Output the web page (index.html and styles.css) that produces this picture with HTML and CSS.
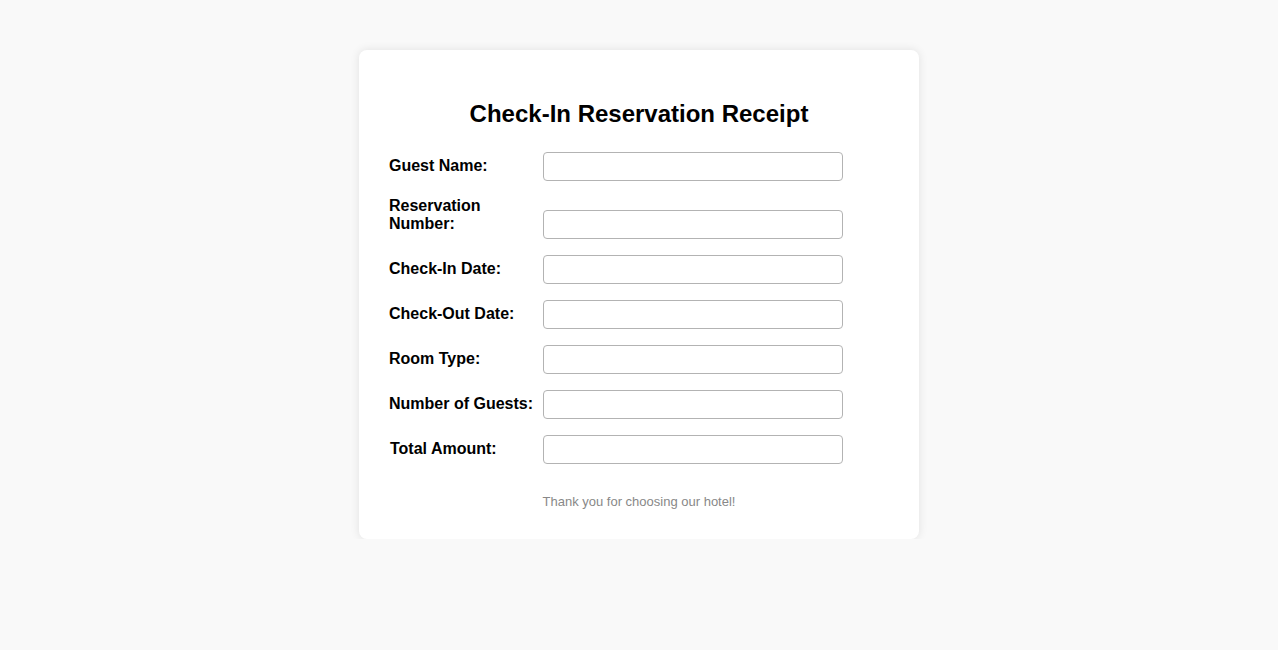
FILE: index.html
```html
<!DOCTYPE html>
<html>
<head>
<meta charset="utf-8">
<title>Check-In Reservation Receipt</title>
<link rel="stylesheet" href="styles.css">
</head>
<body>
<div class="card">
  <h2 class="title">Check-In Reservation Receipt</h2>
  <form class="form">
    <div class="group"><label class="label">Guest Name:</label> <input class="field" type="text"></div>
    <div class="group"><label class="label">Reservation Number:</label> <input class="field" type="text"></div>
    <div class="group"><label class="label">Check-In Date:</label> <input class="field" type="text"></div>
    <div class="group"><label class="label">Check-Out Date:</label> <input class="field" type="text"></div>
    <div class="group"><label class="label">Room Type:</label> <input class="field" type="text"></div>
    <div class="group"><label class="label">Number of Guests:</label> <input class="field" type="text"></div>
    <div class="group"><label class="label label-shift">Total Amount:</label> <input class="field" type="text"></div>
  </form>
  <p class="footer">Thank you for choosing our hotel!</p>
</div>
</body>
</html>
```

FILE: styles.css
```css
html, body {
  margin: 0;
  padding: 0;
}
body {
  background: #f9f9f9;
  font-family: "Liberation Sans", Arial, sans-serif;
  font-size: 16px;
  color: #000;
  padding-top: 50px;
}
.card {
  width: 500px;
  margin: 0 auto;
  padding: 30px;
  background: #fff;
  border-radius: 8px;
  box-shadow: 0 0 10px rgba(0, 0, 0, 0.1);
}
.title {
  text-align: center;
  font-size: 24px;
  font-weight: bold;
  margin: 20px 0 24px;
}
.form {
  margin: 0;
}
.group {
  margin-bottom: 16px;
}
.label {
  display: inline-block;
  width: 150px;
  font-weight: bold;
}
.label-shift {
  padding-left: 1px;
  width: 149px;
}
.field {
  width: 300px;
  box-sizing: border-box;
  height: 29px;
  padding: 6px;
  border: 1px solid #b3b3b3;
  border-radius: 4px;
  font-family: "Liberation Sans", Arial, sans-serif;
  font-size: 13px;
  background: #fff;
}
.footer {
  text-align: center;
  font-size: 13px;
  color: #888;
  margin: 30px 0 0;
}
```
